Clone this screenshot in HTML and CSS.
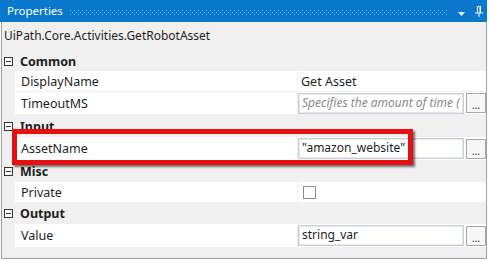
FILE: index.html
```html
<!DOCTYPE html>
<html>
<head>
<meta charset="utf-8">
<link rel="stylesheet" href="styles.css">
</head>
<body>
<div class="window">
  <div class="titlebar">
    <span class="title">Properties</span>
    <svg class="grip" width="378" height="5" viewBox="0 0 378 5">
      <defs>
        <pattern id="dots" width="4" height="4" patternUnits="userSpaceOnUse">
          <rect x="0" y="0" width="1" height="1" fill="#5aa6e6"/>
          <rect x="2" y="2" width="1" height="1" fill="#5aa6e6"/>
        </pattern>
      </defs>
      <rect width="378" height="5" fill="url(#dots)"/>
    </svg>
    <svg class="arrow" width="7" height="4" viewBox="0 0 7 4"><path d="M0 0H7L3.5 4Z" fill="#fff"/></svg>
    <svg class="pin" width="8" height="11" viewBox="0 0 8 11">
      <path d="M2 0.5H6M2.5 0.5V6.5M5.5 0.5V6.5M0 7H8M4 7V11" stroke="#fff" stroke-width="1" fill="none"/>
      <rect x="4.5" y="0.5" width="1.5" height="6" fill="#fff"/>
    </svg>
  </div>
  <div class="body">
    <div class="typename">UiPath.Core.Activities.GetRobotAsset</div>
    <div class="cat h20"><span class="toggle"></span><span class="catname">Common</span></div>
    <div class="prop h21"><div class="name">DisplayName</div><div class="val"><span class="plain">Get Asset</span></div></div>
    <div class="prop h23"><div class="name">TimeoutMS</div><div class="val"><div class="field placeholder">Specifies the amount of time (</div><div class="btn">...</div></div></div>
    <div class="cat h22"><span class="toggle"></span><span class="catname">Input</span></div>
    <div class="prop h24"><div class="name">AssetName</div><div class="val"><div class="field">"amazon_website"</div><div class="btn">...</div></div></div>
    <div class="cat h21"><span class="toggle"></span><span class="catname">Misc</span></div>
    <div class="prop h21"><div class="name">Private</div><div class="val"><span class="check"></span></div></div>
    <div class="cat h21"><span class="toggle"></span><span class="catname">Output</span></div>
    <div class="prop h24"><div class="name">Value</div><div class="val"><div class="field">string_var</div><div class="btn">...</div></div></div>
  </div>
  <div class="highlight"></div>
</div>
</body>
</html>
```
FILE: styles.css
```css
html, body {
  margin: 0;
  padding: 0;
  background: #ffffff;
}
body {
  font-family: "Segoe UI", "Noto Sans", "Open Sans", sans-serif;
  font-size: 12px;
  color: #1e1e1e;
}
.window {
  position: relative;
  width: 487px;
}
.titlebar {
  height: 22px;
  background: #0a78cd;
  display: flex;
  align-items: center;
  color: #fff;
}
.title {
  margin-left: 7px;
  width: 63px;
  font-size: 11.5px;
  line-height: 16px;
}
.grip {
  display: block;
  margin-top: 3px;
}
.arrow {
  display: block;
  margin-left: 10px;
  margin-top: 5px;
}
.pin {
  display: block;
  margin-left: 10px;
  margin-top: 1px;
}
.body {
  margin-left: 1px;
  border-left: 1px solid #a0a0a0;
  border-right: 1px solid #a0a0a0;
  border-bottom: 1px solid #a0a0a0;
  background: #f0f0f0;
  height: 236px;
  display: flex;
  flex-direction: column;
}
.typename {
  height: 29px;
  box-sizing: border-box;
  padding: 5px 0 0 2px;
  line-height: 18px;
}
.h20 { height: 20px; }
.h21 { height: 21px; }
.h22 { height: 22px; }
.h23 { height: 23px; }
.h24 { height: 24px; }
.cat {
  display: flex;
  align-items: center;
  flex-shrink: 0;
}
.toggle {
  width: 7px;
  height: 7px;
  border: 1px solid #333;
  margin-left: 2px;
  position: relative;
  background: #fff;
}
.toggle::after {
  content: "";
  position: absolute;
  left: 1px;
  top: 3px;
  width: 5px;
  height: 1px;
  background: #333;
}
.catname {
  margin-left: 7px;
  font-weight: bold;
  font-size: 12.5px;
}
.prop {
  display: grid;
  grid-template-columns: 282px 1fr;
  margin-left: 13px;
  flex-shrink: 0;
  box-sizing: border-box;
  border-bottom: 1px solid #f0f0f0;
  background: #fff;
}
.name {
  padding-left: 6px;
  display: flex;
  align-items: center;
  font-size: 12.5px;
}
.val {
  display: flex;
  align-items: center;
  border-left: 1px solid #f0f0f0;
}
.plain {
  padding-left: 3px;
  font-size: 12.5px;
}
.field {
  box-sizing: border-box;
  width: 166px;
  height: 21px;
  border: 1px solid #c6cfda;
  box-shadow: inset 0 0 0 1px #e4e9ef;
  padding-left: 3px;
  line-height: 18px;
  white-space: nowrap;
  overflow: hidden;
  background: #fff;
}
.placeholder {
  color: #8a8a8a;
  font-style: italic;
}
.btn {
  box-sizing: border-box;
  width: 20px;
  height: 20px;
  margin-left: 2px;
  border: 1px solid #a8a8a8;
  background: #f6f6f6;
  font-size: 10px;
  line-height: 22px;
  text-align: center;
  color: #222;
}
.check {
  box-sizing: border-box;
  width: 13px;
  height: 13px;
  margin-left: 5px;
  border: 1px solid #8e8e8e;
  background: #fff;
}
.highlight {
  position: absolute;
  left: 12px;
  top: 129px;
  width: 401px;
  height: 36px;
  box-sizing: border-box;
  border: 5px solid #e60f12;
  box-shadow: 2px 2px 2px rgba(0, 0, 0, 0.55);
}
```
